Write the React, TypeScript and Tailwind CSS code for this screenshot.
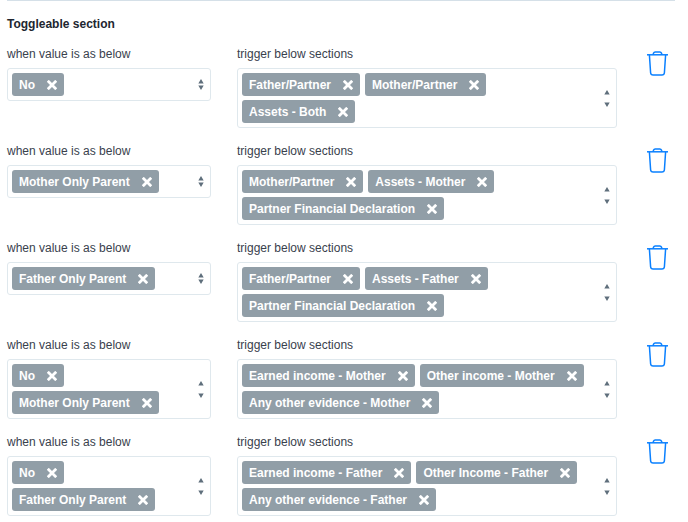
import { useState } from 'react';

type Rule = {
    id: number;
    values: string[];
    sections: string[];
};

const initialRules: Rule[] = [
    { id: 1, values: ['No'], sections: ['Father/Partner', 'Mother/Partner', 'Assets - Both'] },
    { id: 2, values: ['Mother Only Parent'], sections: ['Mother/Partner', 'Assets - Mother', 'Partner Financial Declaration'] },
    { id: 3, values: ['Father Only Parent'], sections: ['Father/Partner', 'Assets - Father', 'Partner Financial Declaration'] },
    { id: 4, values: ['No', 'Mother Only Parent'], sections: ['Earned income - Mother', 'Other income - Mother', 'Any other evidence - Mother'] },
    { id: 5, values: ['No', 'Father Only Parent'], sections: ['Earned income - Father', 'Other Income - Father', 'Any other evidence - Father'] },
];

function TrashIcon() {
    return (
        <svg width="21" height="25" viewBox="0 0 21 25" fill="none" stroke="currentColor" strokeWidth="1.5" strokeLinejoin="round" aria-hidden="true">
            <path d="M0 3.8H21" />
            <path d="M6 3.8L6.6 2.1Q7 .9 8.2 .9H12.8Q14 .9 14.4 2.1L15 3.8" />
            <path d="M2.4 4L3.6 21.8Q3.8 24.1 6.1 24.1H14.9Q17.2 24.1 17.4 21.8L18.6 4" />
        </svg>
    );
}

function Tag({ text, onRemove }: { text: string; onRemove: () => void }) {
    return (
        <li className="flex h-[23px] items-center gap-3 rounded-[3px] bg-[#919ea7] px-[7px] font-bold whitespace-nowrap text-white">
            {text}
            <button type="button" aria-label={`Remove ${text}`} onClick={onRemove} className="cursor-pointer">
                <svg width="10" height="10" viewBox="0 0 10 10" stroke="currentColor" strokeWidth="2.8" aria-hidden="true">
                    <path d="M0.8 0.8L9.2 9.2M9.2 0.8L0.8 9.2" />
                </svg>
            </button>
        </li>
    );
}

function TagSelect({ id, label, items, onChange }: {
    id: string;
    label: string;
    items: string[];
    onChange: (items: string[]) => void;
}) {
    const tall = items.length > 1;

    return (
        <div role="group" aria-labelledby={id} className="min-w-0">
            <div id={id} className="leading-[18px] text-[#39414d]">{label}</div>
            <div className="mt-[5px] flex items-stretch rounded-[3px] border border-[#dfe8ed] p-1">
                <ul className="flex min-h-[23px] flex-1 flex-wrap gap-x-[5px] gap-y-1 pr-3">
                    {items.map((item) => (
                        <Tag key={item} text={item} onRemove={() => onChange(items.filter((i) => i !== item))} />
                    ))}
                </ul>
                <button type="button" aria-label={`${label}: show options`} className="flex w-2.5 shrink-0 cursor-pointer items-center justify-center text-[#5f6f7c]">
                    <svg width="6" height={tall ? 17 : 11} viewBox={tall ? '0 0 6 17' : '0 0 6 11'} fill="currentColor" aria-hidden="true">
                        <path d="M3 0L5.7 4.5H0.3Z" />
                        <path d={tall ? 'M3 17L0.3 12.5H5.7Z' : 'M3 11L0.3 6.5H5.7Z'} />
                    </svg>
                </button>
            </div>
        </div>
    );
}

export default function App() {
    const [rules, setRules] = useState(initialRules);

    function update(id: number, changes: Partial<Rule>) {
        setRules(rules.map((rule) => (rule.id === id ? { ...rule, ...changes } : rule)));
    }

    return (
        <main className="bg-white pr-[13px] pl-[7px] font-['Liberation_Sans',Arial,sans-serif] text-xs">
            <section className="border-t border-[#d5e0e8] pt-3.5">
                <h2 className="font-bold leading-[18px] text-[#212630]">Toggleable section</h2>
                <div className="mt-3 flex flex-col gap-3.5">
                    {rules.map((rule) => (
                        <div key={rule.id} className="grid grid-cols-[51fr_95fr_32px] items-start gap-x-[26px]">
                            <TagSelect
                                id={`values-${rule.id}`}
                                label="when value is as below"
                                items={rule.values}
                                onChange={(values) => update(rule.id, { values })}
                            />
                            <TagSelect
                                id={`sections-${rule.id}`}
                                label="trigger below sections"
                                items={rule.sections}
                                onChange={(sections) => update(rule.id, { sections })}
                            />
                            <button
                                type="button"
                                aria-label="Delete rule"
                                onClick={() => setRules(rules.filter((r) => r.id !== rule.id))}
                                className="mt-1.5 ml-1 w-fit cursor-pointer text-[#0a80ff]"
                            >
                                <TrashIcon />
                            </button>
                        </div>
                    ))}
                </div>
            </section>
        </main>
    );
}
